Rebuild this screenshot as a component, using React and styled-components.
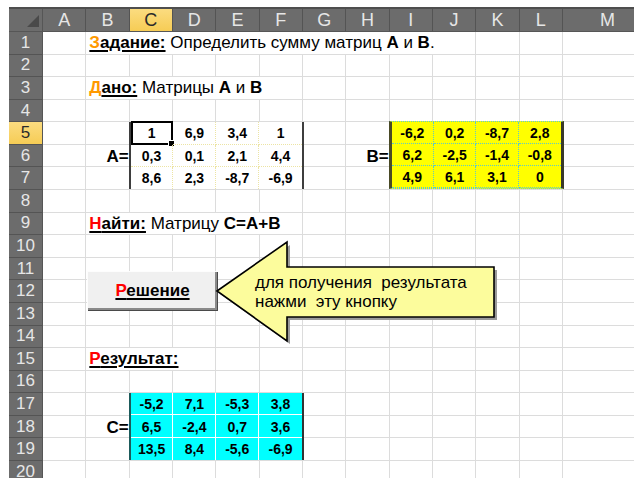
import React from "react";
import styled, { createGlobalStyle } from "styled-components";

const GlobalStyle = createGlobalStyle`
  html, body {
    margin: 0;
    background: #fff;
  }
  body {
    font-family: "Liberation Sans", Arial, sans-serif;
    overflow: hidden;
  }
`;

const COLS = ["A", "B", "C", "D", "E", "F", "G", "H", "I", "J", "K", "L", "M"];
const ROW_COUNT = 20;
const ORANGE = "#ff9900";
const RED = "#ff0000";

const Page = styled.div`
  position: relative;
  width: 634px;
  height: 478px;
  overflow: hidden;
  box-sizing: border-box;
  padding: 7px 0 0 9px;
`;

const Sheet = styled.div`
  display: grid;
  grid-template-columns: 34px repeat(12, 43.33px) 90px;
  grid-template-rows: 23px repeat(${ROW_COUNT}, 22.58px);
  border-top: 2px solid #4e4e4e;
`;

const Corner = styled.div`
  grid-row: 1;
  grid-column: 1;
  position: relative;
  background: #6c6c6c;
  border-right: 1px solid #565656;
  border-bottom: 1px solid #565656;

  &::after {
    content: "";
    position: absolute;
    right: 3px;
    bottom: 4px;
    border-left: 12px solid transparent;
    border-bottom: 12px solid #4a4a4a;
  }
`;

const ColHead = styled.div`
  grid-row: 1;
  grid-column: ${(p) => p.$col};
  display: flex;
  align-items: center;
  justify-content: center;
  font-size: 18px;
  color: ${(p) => (p.$active ? "#2a2a2a" : "#e6e6e6")};
  background: ${(p) => (p.$active ? "linear-gradient(#fbdc80, #f6cc55)" : "#6c6c6c")};
  border-right: 1px solid #545454;
  border-bottom: 1px solid #565656;
`;

const RowHead = styled.div`
  grid-row: ${(p) => p.$row};
  grid-column: 1;
  display: flex;
  align-items: center;
  justify-content: center;
  font-size: 17px;
  color: ${(p) => (p.$active ? "#2a2a2a" : "#e6e6e6")};
  background: ${(p) => (p.$active ? "linear-gradient(#fbdc80, #f6cc55)" : "#6c6c6c")};
  border-right: 1px solid #565656;
  border-bottom: 1px solid #545454;
`;

const Cell = styled.div`
  grid-row: ${(p) => p.$row};
  grid-column: ${(p) => p.$col};
  background: #fff;
  border-right: 1px solid #dcdcdc;
  border-bottom: 1px solid #dcdcdc;
`;

/* text that spills over neighbouring cells hides their gridlines */
const Label = styled.div`
  grid-row: ${(p) => p.$row};
  grid-column: 3 / span ${(p) => p.$span};
  margin: 0 1px 1px 0;
  display: flex;
  align-items: center;
  padding: 1px 0 0 3px;
  background: #fff;
  font-size: 17px;
  color: #000;
`;

const Line = styled.span`
  white-space: pre;
`;

const Key = styled.span`
  font-weight: bold;
  text-decoration: underline;
  text-decoration-thickness: 2px;
  text-underline-offset: 2px;
`;

const Initial = styled.span`
  color: ${(p) => p.$color};
`;

const MatrixName = styled.div`
  grid-row: ${(p) => p.$row};
  grid-column: ${(p) => p.$col};
  display: flex;
  align-items: center;
  justify-content: flex-end;
  padding: 1px 1px 0 0;
  font-size: 17px;
  font-weight: bold;
`;

const themes = {
  a: { bg: "#fff", line: "1px dotted #ece4a4", left: "2px solid #3e3e3e", right: "2px solid #3e3e3e" },
  b: { bg: "#ffff00", line: "1px dotted #5cc9c9", left: "3px solid #4a4a26", right: "3px solid #3a3a2a" },
  c: { bg: "#00ffff", line: "1px solid #ffffff", left: "2px solid #1d5b5b", right: "2px solid #333" },
};

const Matrix = styled.div`
  grid-row: ${(p) => p.$row} / span 3;
  grid-column: ${(p) => p.$col} / span 4;
  margin: ${(p) => (p.$kind === "b" ? "-1px" : "0")} -1px 1px -1px;
  display: grid;
  grid-template-columns: repeat(4, 1fr);
  grid-template-rows: repeat(3, 1fr);
  background: ${(p) => themes[p.$kind].bg};
  border-left: ${(p) => themes[p.$kind].left};
  border-right: ${(p) => themes[p.$kind].right};
  border-top: ${(p) => (p.$kind === "b" ? themes.b.line : "none")};
  border-bottom: ${(p) => (p.$kind === "b" ? themes.b.line : "none")};
`;

const Value = styled.div`
  position: relative;
  display: flex;
  align-items: center;
  justify-content: center;
  padding-top: 1px;
  font-size: 14px;
  font-weight: bold;
  color: #000;
  border-right: ${(p) => (p.$lastCol ? "none" : themes[p.$kind].line)};
  border-bottom: ${(p) => (p.$lastRow ? "none" : themes[p.$kind].line)};

  ${(p) =>
    p.$active &&
    `
    &::before {
      content: "";
      position: absolute;
      inset: -1px -1px -1px 0;
      border: 2px solid #000;
    }
    &::after {
      content: "";
      position: absolute;
      right: -3px;
      bottom: -3px;
      width: 5px;
      height: 5px;
      background: #000;
      border: 1px solid #fff;
    }
  `}
`;

const ActionButton = styled.button`
  position: absolute;
  left: 87px;
  top: 271px;
  width: 130px;
  height: 39px;
  padding: 0;
  font-family: inherit;
  font-size: 17px;
  font-weight: bold;
  color: #000;
  background: #f0f0f0;
  border: none;
  border-top: 1px solid #fdfdfd;
  border-left: 1px solid #fdfdfd;
  box-shadow: inset -2px -2px 0 #8a8a8a, 1px 1px 0 #4a4a4a;
  text-decoration: underline;
  text-decoration-thickness: 2px;
  text-underline-offset: 2px;
`;

const Callout = styled.div`
  position: absolute;
  left: 214px;
  top: 238px;
  width: 290px;
  height: 110px;
  box-sizing: border-box;
  padding: 35px 0 0 41px;

  svg {
    position: absolute;
    left: 0;
    top: 0;
  }
`;

const CalloutText = styled.div`
  position: relative;
  font-size: 17px;
  line-height: 19px;
  color: #000;
  white-space: pre;
`;

const ARROW = "3,53 73,4 73,29 280,29 280,79 73,79 73,103";

const A = [
  ["1", "6,9", "3,4", "1"],
  ["0,3", "0,1", "2,1", "4,4"],
  ["8,6", "2,3", "-8,7", "-6,9"],
];
const B = [
  ["-6,2", "0,2", "-8,7", "2,8"],
  ["6,2", "-2,5", "-1,4", "-0,8"],
  ["4,9", "6,1", "3,1", "0"],
];
const C = [
  ["-5,2", "7,1", "-5,3", "3,8"],
  ["6,5", "-2,4", "0,7", "3,6"],
  ["13,5", "8,4", "-5,6", "-6,9"],
];

const MatrixView = ({ kind, row, col, data, activeFirst }) => (
  <Matrix $kind={kind} $row={row} $col={col}>
    {data.map((line, r) =>
      line.map((v, c) => (
        <Value
          key={`${r}-${c}`}
          $kind={kind}
          $lastCol={c === 3}
          $lastRow={r === 2 && kind !== "b"}
          $active={activeFirst && r === 0 && c === 0}
        >
          {v}
        </Value>
      ))
    )}
  </Matrix>
);

export default function App() {
  const rows = Array.from({ length: ROW_COUNT }, (_, i) => i + 1);

  return (
    <Page>
      <GlobalStyle />
      <Sheet>
        <Corner />
        {COLS.map((c, i) => (
          <ColHead key={c} $col={i + 2} $active={c === "C"}>
            {c}
          </ColHead>
        ))}
        {rows.map((r) => (
          <React.Fragment key={r}>
            <RowHead $row={r + 1} $active={r === 5}>
              {r}
            </RowHead>
            {COLS.map((c, i) => (
              <Cell key={c} $row={r + 1} $col={i + 2} />
            ))}
          </React.Fragment>
        ))}

        <Label $row={2} $span={9}>
          <Line>
            <Key>
              <Initial $color={ORANGE}>З</Initial>адание:
            </Key>
            {" Определить сумму матриц "}
            <b>А</b>
            {" и "}
            <b>В</b>.
          </Line>
        </Label>

        <Label $row={4} $span={5}>
          <Line>
            <Key>
              <Initial $color={ORANGE}>Д</Initial>ано:
            </Key>
            {" Матрицы "}
            <b>А</b>
            {" и "}
            <b>В</b>
          </Line>
        </Label>

        <MatrixName $row={7} $col={3}>А=</MatrixName>
        <MatrixView kind="a" row={6} col={4} data={A} activeFirst />

        <MatrixName $row={7} $col={9}>В=</MatrixName>
        <MatrixView kind="b" row={6} col={10} data={B} />

        <Label $row={10} $span={5}>
          <Line>
            <Key>
              <Initial $color={RED}>Н</Initial>айти:
            </Key>
            {" Матрицу "}
            <b>С=А+В</b>
          </Line>
        </Label>

        <Label $row={16} $span={3}>
          <Line>
            <Key>
              <Initial $color={RED}>Р</Initial>езультат:
            </Key>
          </Line>
        </Label>

        <MatrixName $row={19} $col={3}>С=</MatrixName>
        <MatrixView kind="c" row={18} col={4} data={C} />
      </Sheet>

      <ActionButton>
        <Initial $color={RED}>Р</Initial>ешение
      </ActionButton>

      <Callout>
        <svg width="290" height="110" viewBox="0 0 290 110">
          <polygon points={ARROW} transform="translate(3 3)" fill="#9a9a9a" />
          <polygon points={ARROW} fill="#fcfc9c" stroke="#000" strokeWidth="1.6" strokeLinejoin="miter" />
        </svg>
        <CalloutText>{"для получения  результата\nнажми  эту кнопку"}</CalloutText>
      </Callout>
    </Page>
  );
}
